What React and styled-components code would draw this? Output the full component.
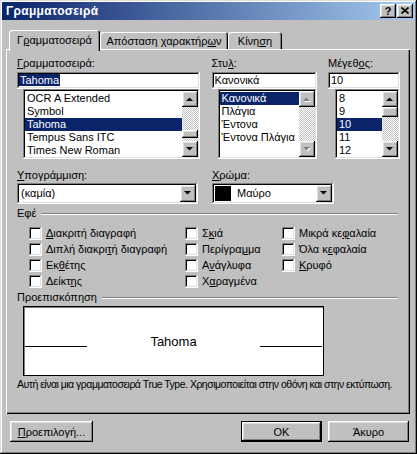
import React from "react";
import styled, { createGlobalStyle, css } from "styled-components";

const GlobalStyle = createGlobalStyle`
  html, body { margin: 0; padding: 0; background: #c0c0c0; }
  body {
    font-family: "Liberation Sans", Arial, sans-serif;
    font-size: 11px;
    color: #000;
  }
  * { box-sizing: border-box; }
`;

const raised = css`
  box-shadow: inset -1px -1px #000, inset 1px 1px #fff, inset -2px -2px #808080,
    inset 2px 2px #dfdfdf;
`;

const sunken = css`
  box-shadow: inset -1px -1px #fff, inset 1px 1px #808080, inset -2px -2px #dfdfdf,
    inset 2px 2px #000;
`;

const NAVY = "#0a246a";

const Window = styled.div`
  width: 417px;
  height: 454px;
  padding: 2px;
  background: #c0c0c0;
  box-shadow: inset -1px -1px #000, inset 1px 1px #dfdfdf, inset -2px -2px #808080,
    inset 2px 2px #fff;
  display: flex;
  flex-direction: column;
`;

const TitleBar = styled.div`
  height: 18px;
  display: flex;
  align-items: center;
  padding: 0 2px 0 4px;
  background: linear-gradient(to right, ${NAVY}, #a6caf0);
`;

const Title = styled.div`
  flex: 1;
  color: #fff;
  font-weight: bold;
  font-size: 12px;
  letter-spacing: 0.3px;
`;

const TitleButton = styled.div`
  width: 16px;
  height: 14px;
  margin-left: 1px;
  background: #c0c0c0;
  ${raised};
  display: flex;
  align-items: center;
  justify-content: center;
  font-weight: bold;
  font-size: 11px;
  line-height: 14px;
  padding-bottom: 1px;
`;

const Body = styled.div`
  padding: 10px 5px 0 4px;
`;

const TabStrip = styled.div`
  display: flex;
  align-items: flex-end;
  height: 19px;
  padding-left: 3px;
`;

const Tab = styled.div`
  position: relative;
  width: ${(p) => p.$w}px;
  height: ${(p) => (p.$active ? 21 : 17)}px;
  margin-bottom: ${(p) => (p.$active ? -2 : 0)}px;
  padding-bottom: ${(p) => (p.$active ? 2 : 0)}px;
  background: #c0c0c0;
  border-radius: 3px 3px 0 0;
  box-shadow: inset 1px 1px #fff, inset -1px 0 #000, inset -2px 0 #808080;
  display: flex;
  align-items: center;
  justify-content: center;
  white-space: nowrap;
`;

const Panel = styled.div`
  height: 365px;
  padding: 8px 10px 0 11px;
  box-shadow: inset 1px 1px #fff, inset -1px -1px #000, inset -2px -2px #808080;
  display: flex;
  flex-direction: column;
`;

const FieldRow = styled.div`
  display: flex;
  justify-content: ${(p) => (p.$spread ? "space-between" : "flex-start")};
  gap: ${(p) => (p.$spread ? 0 : 14)}px;
  margin-top: ${(p) => p.$mt || 0}px;
`;

const Column = styled.div`
  width: ${(p) => p.$w}px;
  display: flex;
  flex-direction: column;
`;

const Label = styled.div`
  height: 13px;
  line-height: 13px;
  margin-bottom: ${(p) => p.$mb ?? 2}px;
  white-space: nowrap;
`;

const TextBox = styled.div`
  height: 17px;
  background: #fff;
  ${sunken};
  padding: 2px 3px 0 3px;
  line-height: 13px;
  white-space: nowrap;
`;

const Highlight = styled.span`
  background: ${NAVY};
  color: #fff;
  padding: 0 1px;
  margin-left: -1px;
`;

const ListBox = styled.div`
  height: 70px;
  margin-left: ${(p) => p.$ml}px;
  background: #fff;
  ${sunken};
  padding: 2px;
  display: flex;
`;

const Items = styled.div`
  flex: 1;
  padding-top: 1px;
  overflow: hidden;
`;

const Item = styled.div`
  height: 13px;
  line-height: 13px;
  padding-left: 2px;
  white-space: nowrap;
  background: ${(p) => (p.$selected ? NAVY : "transparent")};
  color: ${(p) => (p.$selected ? "#fff" : "#000")};
`;

const ScrollBar = styled.div`
  width: 16px;
  display: flex;
  flex-direction: column;
`;

const ArrowButton = styled.div`
  width: 16px;
  height: ${(p) => p.$h || 16}px;
  flex: none;
  background: #c0c0c0;
  ${raised};
  display: flex;
  align-items: center;
  justify-content: center;
`;

const Track = styled.div`
  flex: 1;
  background-color: #fff;
  background-image: repeating-conic-gradient(#c0c0c0 0% 25%, #fff 0% 50%);
  background-size: 2px 2px;
`;

const Thumb = styled.div`
  width: 16px;
  height: ${(p) => p.$h}px;
  margin-top: ${(p) => p.$top}px;
  background: #c0c0c0;
  ${raised};
`;

const Combo = styled.div`
  width: ${(p) => p.$w}px;
  height: 21px;
  background: #fff;
  ${sunken};
  padding: 2px;
  display: flex;
  align-items: center;
`;

const ComboText = styled.div`
  flex: 1;
  padding-left: ${(p) => p.$pl ?? 2}px;
  line-height: 13px;
`;

const Swatch = styled.div`
  width: 16px;
  height: 15px;
  margin-left: 1px;
  background: ${(p) => p.$color};
`;

const Legend = styled.div`
  display: flex;
  align-items: center;
  height: 13px;
  margin-top: ${(p) => p.$mt}px;
  line-height: 13px;
`;

const Rule = styled.div`
  flex: 1;
  margin: 1px 2px 0 5px;
  border-top: 1px solid #808080;
  border-bottom: 1px solid #fff;
`;

const EffectsGrid = styled.div`
  display: grid;
  grid-template-columns: 156px 97px 1fr;
  grid-auto-rows: 16px;
  margin-top: 5px;
  padding-left: 12px;
`;

const CheckRow = styled.div`
  display: flex;
  align-items: center;
  gap: 4px;
  white-space: nowrap;
`;

const CheckBox = styled.div`
  width: 13px;
  height: 13px;
  flex: none;
  background: #fff;
  ${sunken};
`;

const PreviewBox = styled.div`
  width: 301px;
  height: 70px;
  margin: 2px 0 0 6px;
  background: #fff;
  border: 1px solid #000;
  box-shadow: inset 1px 1px #808080;
  padding: 0 1px;
  display: flex;
  align-items: center;
  justify-content: space-between;
`;

const PreviewLine = styled.div`
  width: 62px;
  height: 1px;
  margin-top: 10px;
  background: #000;
`;

const PreviewText = styled.div`
  font-size: 13px;
  line-height: 15px;
`;

const Note = styled.div`
  margin-top: 2px;
  line-height: 13px;
  font-size: 10.5px;
  letter-spacing: -0.5px;
  white-space: nowrap;
`;

const ButtonRow = styled.div`
  display: flex;
  align-items: center;
  gap: 6px;
  padding: 0 6px 0 8px;
  margin-top: 7px;
`;

const Button = styled.div`
  width: ${(p) => p.$w}px;
  height: 21px;
  margin-right: ${(p) => (p.$push ? "auto" : "0")};
  background: #c0c0c0;
  display: flex;
  align-items: center;
  justify-content: center;
  ${(p) =>
    p.$default
      ? css`
          box-shadow: inset 0 0 0 1px #000, inset -2px -2px #000, inset 2px 2px #fff,
            inset -3px -3px #808080, inset 3px 3px #dfdfdf;
        `
      : raised};
`;

const Key = styled.span`
  text-decoration: underline;
`;

const Arrow = ({ dir, disabled }) => {
  const pts = dir === "up" ? "0,4 7,4 3.5,0.5" : "0,0 7,0 3.5,3.5";
  return (
    <svg width="8" height="5" viewBox="0 0 8 5">
      {disabled && (
        <polygon points={pts} fill="#fff" transform="translate(1,1)" />
      )}
      <polygon points={pts} fill={disabled ? "#808080" : "#000"} />
    </svg>
  );
};

const Scroll = ({ thumbTop, thumbH, disabled }) => (
  <ScrollBar>
    <ArrowButton>
      <Arrow dir="up" disabled={disabled} />
    </ArrowButton>
    <Track>{thumbH ? <Thumb $top={thumbTop} $h={thumbH} /> : null}</Track>
    <ArrowButton>
      <Arrow dir="down" disabled={disabled} />
    </ArrowButton>
  </ScrollBar>
);

const fonts = ["OCR A Extended", "Symbol", "Tahoma", "Tempus Sans ITC", "Times New Roman"];
const styles = ["Κανονικά", "Πλάγια", "Έντονα", "Έντονα Πλάγια"];
const sizes = ["8", "9", "10", "11", "12"];

const effects = [
  [<><Key>Δ</Key>ιακριτή διαγραφή</>, <>Σ<Key>κ</Key>ιά</>, <>Μικρά κε<Key>φ</Key>αλαία</>],
  [<>Διπλή διακρι<Key>τ</Key>ή διαγραφή</>, <>Περίγρα<Key>μ</Key>μα</>, <>Όλα κ<Key>ε</Key>φαλαία</>],
  [<>Εκ<Key>θ</Key>έτης</>, <>Α<Key>ν</Key>άγλυφα</>, <><Key>Κ</Key>ρυφό</>],
  [<>Δείκτ<Key>η</Key>ς</>, <>Χ<Key>α</Key>ραγμένα</>, null],
];

export default function App() {
  return (
    <>
      <GlobalStyle />
      <Window>
        <TitleBar>
          <Title>Γραμματοσειρά</Title>
          <TitleButton>?</TitleButton>
          <TitleButton>
            <svg width="8" height="7" viewBox="0 0 8 7">
              <path d="M0.5 0.5 L7.5 6.5 M7.5 0.5 L0.5 6.5" stroke="#000" strokeWidth="1.6" />
            </svg>
          </TitleButton>
        </TitleBar>
        <Body>
          <TabStrip>
            <Tab $w={91} $active>
              Γ<Key>ρ</Key>αμματοσειρά
            </Tab>
            <Tab $w={128}>
              Απόσταση χαρακτήρ<Key>ω</Key>ν
            </Tab>
            <Tab $w={54}>
              Κίνη<Key>σ</Key>η
            </Tab>
          </TabStrip>
          <Panel>
            <FieldRow $spread>
              <Column $w={183}>
                <Label>
                  <Key>Γ</Key>ραμματοσειρά:
                </Label>
                <TextBox>
                  <Highlight>Tahoma</Highlight>
                </TextBox>
                <ListBox $ml={6}>
                  <Items>
                    {fonts.map((f) => (
                      <Item key={f} $selected={f === "Tahoma"}>
                        {f}
                      </Item>
                    ))}
                  </Items>
                  <Scroll thumbTop={23} thumbH={8} />
                </ListBox>
              </Column>
              <Column $w={105}>
                <Label>
                  Στυ<Key>λ</Key>:
                </Label>
                <TextBox>Κανονικά</TextBox>
                <ListBox $ml={6}>
                  <Items>
                    {styles.map((s, i) => (
                      <Item key={s} $selected={i === 0}>
                        {s}
                      </Item>
                    ))}
                  </Items>
                  <Scroll disabled />
                </ListBox>
              </Column>
              <Column $w={72}>
                <Label>
                  Μέγεθ<Key>ο</Key>ς:
                </Label>
                <TextBox>10</TextBox>
                <ListBox $ml={7}>
                  <Items>
                    {sizes.map((s) => (
                      <Item key={s} $selected={s === "10"}>
                        {s}
                      </Item>
                    ))}
                  </Items>
                  <Scroll thumbTop={0} thumbH={10} />
                </ListBox>
              </Column>
            </FieldRow>

            <FieldRow $mt={10}>
              <Column $w={181}>
                <Label $mb={1}>
                  <Key>Υ</Key>πογράμμιση:
                </Label>
                <Combo $w={181}>
                  <ComboText>(καμία)</ComboText>
                  <ArrowButton $h={17}>
                    <Arrow dir="down" />
                  </ArrowButton>
                </Combo>
              </Column>
              <Column $w={122}>
                <Label $mb={1}>
                  <Key>Χ</Key>ρώμα:
                </Label>
                <Combo $w={122}>
                  <Swatch $color="#000" />
                  <ComboText $pl={6}>Μαύρο</ComboText>
                  <ArrowButton $h={17}>
                    <Arrow dir="down" />
                  </ArrowButton>
                </Combo>
              </Column>
            </FieldRow>

            <Legend $mt={3}>
              Εφέ
              <Rule />
            </Legend>
            <EffectsGrid>
              {effects.flat().map((label, i) =>
                label ? (
                  <CheckRow key={i}>
                    <CheckBox />
                    <span>{label}</span>
                  </CheckRow>
                ) : (
                  <span key={i} />
                )
              )}
            </EffectsGrid>

            <Legend $mt={2}>
              Προεπισκόπηση
              <Rule />
            </Legend>
            <PreviewBox>
              <PreviewLine />
              <PreviewText>Tahoma</PreviewText>
              <PreviewLine />
            </PreviewBox>
            <Note>
              Αυτή είναι μια γραμματοσειρά True Type. Χρησιμοποιείται στην οθόνη και στην
              εκτύπωση.
            </Note>
          </Panel>
        </Body>
        <ButtonRow>
          <Button $w={83} $push>
            <Key>Π</Key>ροεπιλογή...
          </Button>
          <Button $w={81} $default>
            OK
          </Button>
          <Button $w={81}>Άκυρο</Button>
        </ButtonRow>
      </Window>
    </>
  );
}
